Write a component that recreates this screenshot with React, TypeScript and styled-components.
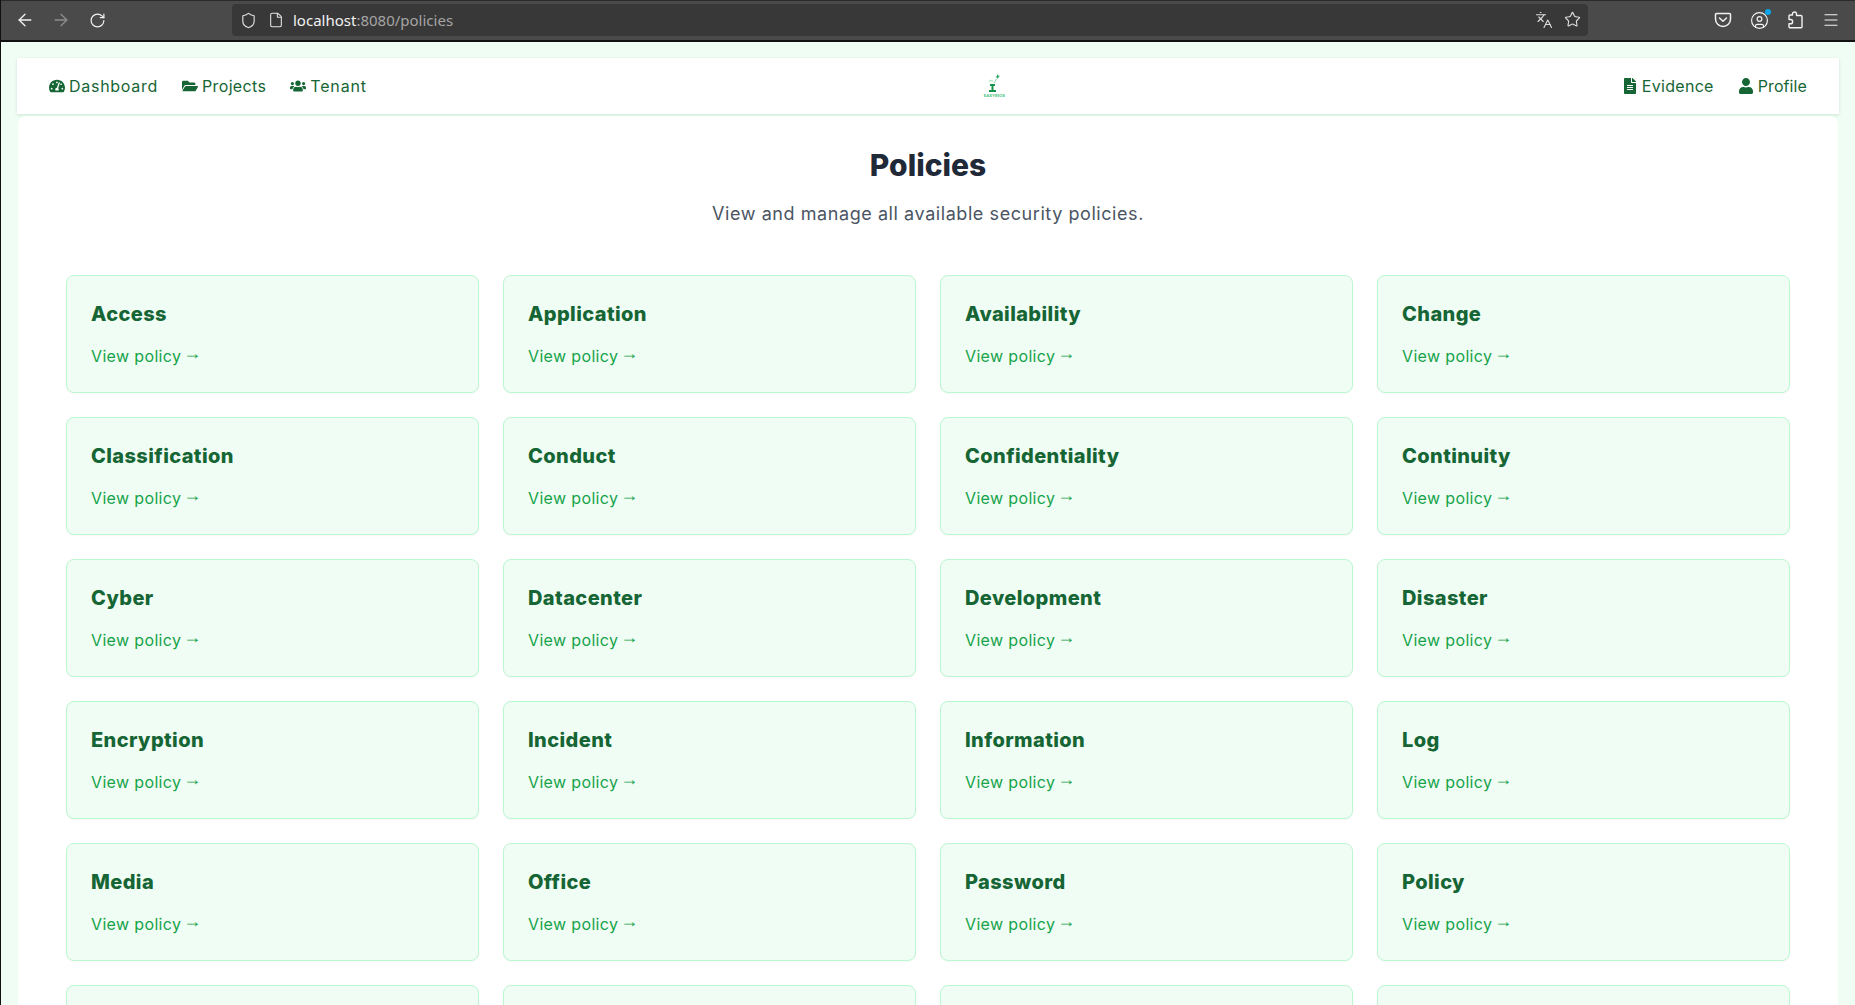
import React from 'react';
import styled, { createGlobalStyle } from 'styled-components';
import {
  ArrowLeft,
  ArrowRight,
  CircleUser,
  File,
  Languages,
  Menu,
  RotateCw,
  Shield,
  Star,
} from 'lucide-react';
import { FaFileAlt, FaFolderOpen, FaTachometerAlt, FaUser, FaUsers } from 'react-icons/fa';

const POLICIES = [
  'Access', 'Application', 'Availability', 'Change',
  'Classification', 'Conduct', 'Confidentiality', 'Continuity',
  'Cyber', 'Datacenter', 'Development', 'Disaster',
  'Encryption', 'Incident', 'Information', 'Log',
  'Media', 'Office', 'Password', 'Policy',
];

const GlobalStyle = createGlobalStyle`
  html, body {
    margin: 0;
    height: 100%;
    overflow: hidden;
    background: #f0fdf4;
    font-family: Inter, "Open Sans", sans-serif;
  }
  * { box-sizing: border-box; }
`;

const Frame = styled.div`
  height: 1005px;
  overflow: hidden;
  border-left: 1px solid #111;
`;

const Toolbar = styled.div`
  height: 42px;
  display: flex;
  align-items: center;
  padding: 1px 6px 2px;
  background: #4a4a4a;
  border-top: 1px solid #2b2b2b;
  border-bottom: 2px solid #111;
`;

const ToolButton = styled.div<{ $dim?: boolean }>`
  width: 36px;
  height: 32px;
  flex: none;
  position: relative;
  display: flex;
  align-items: center;
  justify-content: center;
  color: ${(p) => (p.$dim ? '#8d8d8d' : '#f2f2f2')};
`;

const UrlBar = styled.div`
  width: 1356px;
  height: 32px;
  margin: 0 117px;
  flex: none;
  display: flex;
  align-items: center;
  padding-left: 2px;
  border-radius: 4px;
  background: #383838;
  color: #e4e4e4;
`;

const UrlIcon = styled.div`
  width: 28px;
  flex: none;
  display: flex;
  justify-content: center;
`;

const UrlText = styled.div`
  margin-left: 3px;
  font-family: "Noto Sans", sans-serif;
  font-size: 15px;
  color: #f2f2f2;
  span { color: #a5a5a5; }
`;

const UrlEnd = styled.div`
  margin-left: auto;
  display: flex;
  padding-right: 2px;
`;

const UrlAction = styled.div`
  width: 28px;
  display: flex;
  justify-content: center;
  color: #dcdcdc;
`;

const Dot = styled.span`
  position: absolute;
  top: 5px;
  right: 6px;
  width: 6px;
  height: 6px;
  border-radius: 50%;
  background: #0aa5ec;
`;

const Page = styled.div`
  padding: 16px 16px 0;
`;

const Nav = styled.nav`
  height: 56px;
  display: flex;
  align-items: center;
  justify-content: space-between;
  padding: 0 32px;
  background: #fff;
  box-shadow: 0 1px 3px rgba(0, 0, 0, 0.12);
`;

const NavGroup = styled.div`
  display: flex;
  align-items: center;
  gap: 24px;
`;

const NavLink = styled.a<{ $track: number }>`
  display: flex;
  align-items: center;
  gap: 4px;
  color: #166534;
  font-size: 16px;
  letter-spacing: ${(p) => p.$track}px;
  svg { font-size: 16px; flex: none; }
`;

const Logo = styled.div`
  width: 22px;
  display: flex;
  flex-direction: column;
  align-items: center;
  color: #4cc47e;
`;

const LogoMark = styled.div`
  font-size: 4px;
  line-height: 6px;
  font-weight: 700;
  letter-spacing: 0.1px;
  white-space: nowrap;
`;

const Panel = styled.main`
  margin: 1px 1px 0;
  padding: 31px 48px 0;
  background: #fff;
  border-radius: 8px 8px 0 0;
  border-top: 1px solid #dcfce7;
`;

const Title = styled.h1`
  margin: 0 0 17px;
  text-align: center;
  font-size: 30px;
  line-height: 36px;
  font-weight: 800;
  color: #1f2937;
`;

const Subtitle = styled.p`
  margin: 0 0 47px;
  text-align: center;
  font-size: 18px;
  line-height: 28px;
  color: #4b5563;
  letter-spacing: 0.57px;
`;

const Grid = styled.div`
  display: grid;
  grid-template-columns: repeat(4, 1fr);
  gap: 24px;
`;

const Card = styled.a`
  display: block;
  height: 118px;
  padding: 24px;
  background: #f0fdf4;
  border: 1px solid #bbf7d0;
  border-radius: 8px;
  box-shadow: 0 1px 2px rgba(0, 0, 0, 0.03);
`;

const CardTitle = styled.h2`
  margin: 0 0 16px;
  font-size: 20px;
  line-height: 28px;
  font-weight: 800;
  color: #166534;
  letter-spacing: 0.4px;
`;

const CardLink = styled.span`
  display: block;
  font-size: 16px;
  line-height: 24px;
  color: #16a34a;
  letter-spacing: 0.35px;
`;

const Arrow = styled.span`
  margin-left: -3px;
  font-family: "Liberation Sans", sans-serif;
  font-size: 18px;
  line-height: 0;
  letter-spacing: 0;
  vertical-align: 3px;
`;

const PocketIcon = () => (
  <svg width="18" height="18" viewBox="0 0 18 18" fill="none" stroke="currentColor" strokeWidth="1.5">
    <path d="M2.5 2.5h13a1 1 0 0 1 1 1V8a7.5 7.5 0 0 1-15 0V3.500a1 1 0 0 1 1-1z" />
    <path d="M5.500 7l3.500 3.200L12.500 7" strokeLinecap="round" strokeLinejoin="round" />
  </svg>
);

const PuzzleIcon = () => (
  <svg width="18" height="18" viewBox="0 0 18 18" fill="none" stroke="currentColor" strokeWidth="1.4" strokeLinejoin="round">
    <path d="M6.500 4V3a2 2 0 0 1 4 0v1.500h4.500a1 1 0 0 1 1 1V16a.8.8 0 0 1-.8.8H4a1 1 0 0 1-1-1v-3h1.500a2 2 0 0 0 0-4.300H3V5a1 1 0 0 1 1-1z" />
  </svg>
);

const LogoFigure = () => (
  <svg width="18" height="20" viewBox="0 0 18 20" fill="none">
    <path d="M12 1l1 1.500L15 3l-1.500 1L13 6l-1-1.500L10.500 4 12 3z" fill="#22a559" />
    <path d="M11.500 6L9 10" stroke="#8fd6ac" strokeWidth="1" />
    <path d="M5 11h5v2H8.500v4H11v2H4v-2h2.500v-4H5z" fill="#16934a" />
    <path d="M4 8.500C5 7 7 7 8 8.500" stroke="#b5e6c8" strokeWidth="1.200" />
  </svg>
);

const App = () => {
  return (
    <Frame>
      <GlobalStyle />
      <Toolbar>
        <ToolButton><ArrowLeft size={20} strokeWidth={1.6} /></ToolButton>
        <ToolButton $dim><ArrowRight size={20} strokeWidth={1.6} /></ToolButton>
        <ToolButton><RotateCw size={17} strokeWidth={1.7} /></ToolButton>
        <UrlBar>
          <UrlIcon><Shield size={17} strokeWidth={1.6} /></UrlIcon>
          <UrlIcon><File size={16} strokeWidth={1.6} /></UrlIcon>
          <UrlText>localhost<span>:8080/policies</span></UrlText>
          <UrlEnd>
            <UrlAction><Languages size={18} strokeWidth={1.5} /></UrlAction>
            <UrlAction><Star size={17} strokeWidth={1.6} /></UrlAction>
          </UrlEnd>
        </UrlBar>
        <ToolButton><PocketIcon /></ToolButton>
        <ToolButton><CircleUser size={19} strokeWidth={1.5} /><Dot /></ToolButton>
        <ToolButton><PuzzleIcon /></ToolButton>
        <ToolButton><Menu size={18} strokeWidth={1.5} /></ToolButton>
      </Toolbar>
      <Page>
        <Nav>
          <NavGroup>
            <NavLink $track={0.72}><FaTachometerAlt />Dashboard</NavLink>
            <NavLink $track={0.35}><FaFolderOpen />Projects</NavLink>
            <NavLink $track={0.85}><FaUsers />Tenant</NavLink>
          </NavGroup>
          <Logo>
            <LogoFigure />
            <LogoMark>EASYBIOS</LogoMark>
          </Logo>
          <NavGroup>
            <NavLink $track={0.3}><FaFileAlt />Evidence</NavLink>
            <NavLink $track={0.1}><FaUser />Profile</NavLink>
          </NavGroup>
        </Nav>
        <Panel>
          <Title>Policies</Title>
          <Subtitle>View and manage all available security policies.</Subtitle>
          <Grid>
            {POLICIES.map((name) => (
              <Card key={name}>
                <CardTitle>{name}</CardTitle>
                <CardLink>View policy <Arrow>→</Arrow></CardLink>
              </Card>
            ))}
            {/* next row starts at the fold, only its top edge shows */}
            <Card />
            <Card />
            <Card />
            <Card />
          </Grid>
        </Panel>
      </Page>
    </Frame>
  );
};

export default App;
